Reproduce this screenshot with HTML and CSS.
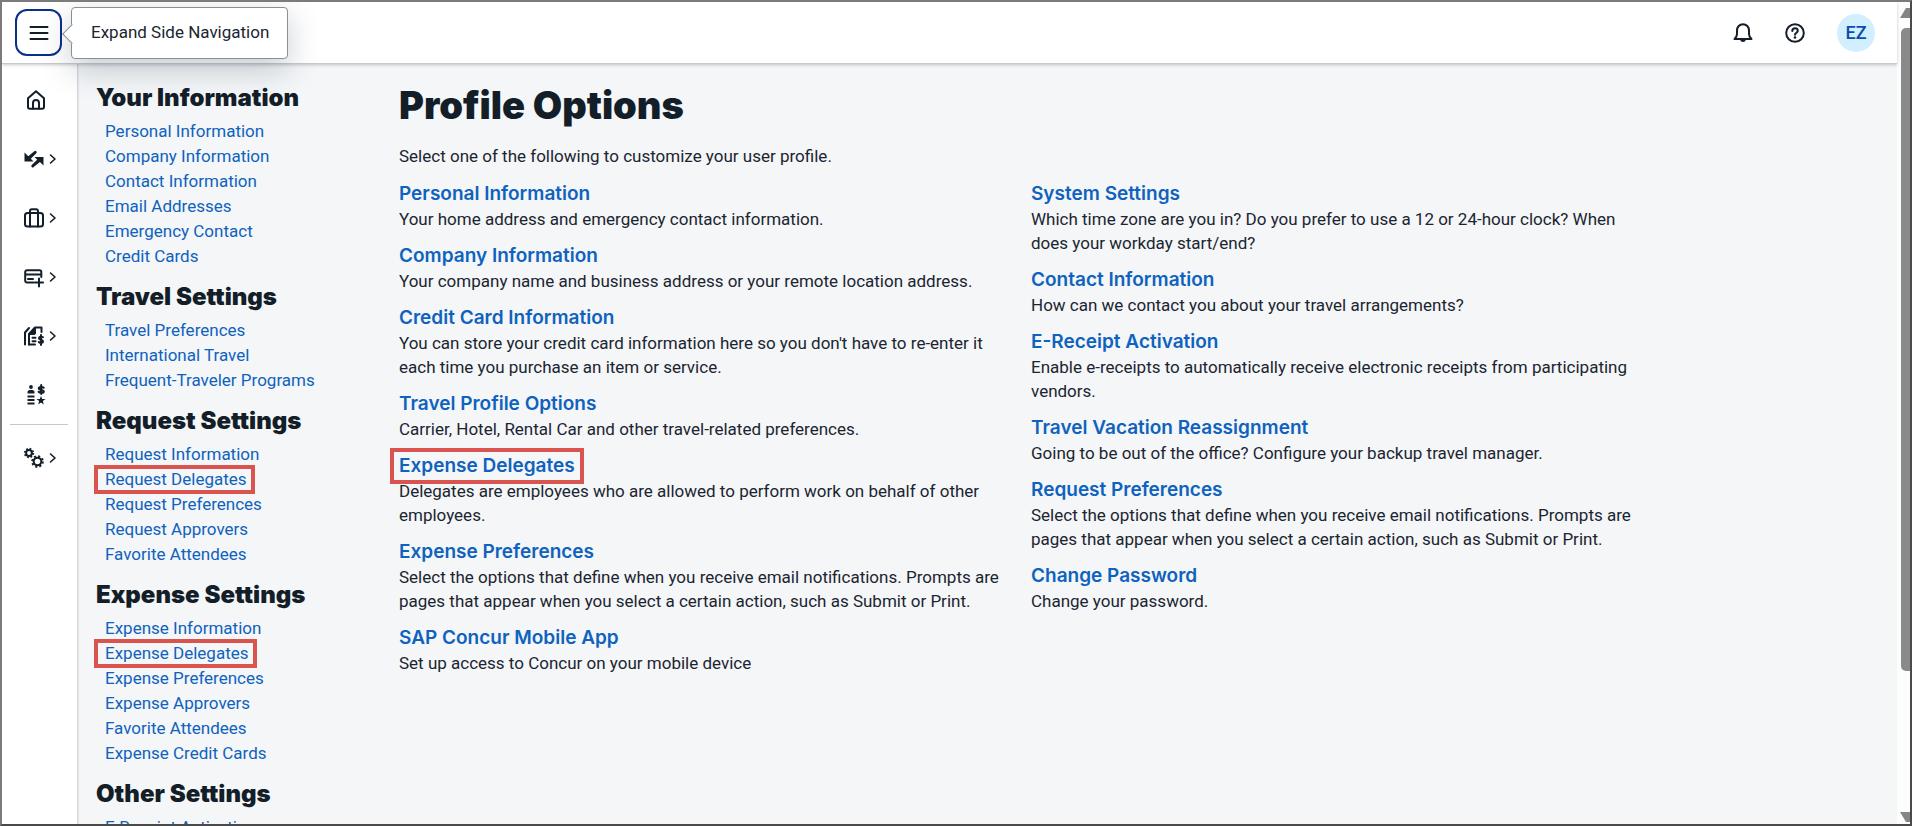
FILE: index.html
```html
<!DOCTYPE html>
<html lang="en">
<head>
    <meta charset="UTF-8">
    <meta name="viewport" content="width=device-width, initial-scale=1.0">
    <title>Profile Options</title>
    <link rel="stylesheet" href="styles.css">
</head>
<body>
    <div class="app">
        <header class="topbar">
            <div class="menu">
                <button class="menu-btn" aria-label="Expand Side Navigation">
                    <svg width="20" height="16" viewBox="0 0 20 16"><path d="M1.500 2h17M1.500 8h17M1.500 14h17"/></svg>
                </button>
                <div class="tooltip" role="tooltip">Expand Side Navigation</div>
            </div>
            <div class="tools">
                <button class="icon-btn" aria-label="Notifications">
                    <svg width="20" height="20" viewBox="0 0 20 20"><path d="M1.500 16h17c-1.800-1.500-2.500-3-2.500-5V7.500C16 4 13.500 1.200 10 1.200S4 4 4 7.500V11c0 2-.7 3.500-2.500 5z"/><path class="solid" d="M7 16.500h6c-.5 1.700-1.600 2.500-3 2.500s-2.500-.8-3-2.500z"/></svg>
                </button>
                <button class="icon-btn" aria-label="Help">
                    <svg width="20" height="20" viewBox="0 0 20 20"><circle cx="10" cy="10" r="8.800"/><path d="M7.300 8c0-1.700 1.200-2.700 2.800-2.700s2.700 1 2.700 2.400c0 2-2.800 2-2.800 4"/><circle class="solid" cx="10" cy="14.500" r="1.300"/></svg>
                </button>
                <button class="avatar">EZ</button>
            </div>
        </header>

        <div class="body">
            <nav class="rail" aria-label="Side navigation">
                <a href="#" class="rail-item" aria-label="Home">
                    <svg width="20" height="20" viewBox="0 0 20 20"><path d="M2 8.200 10 1.200l8 7V17a1.800 1.800 0 0 1-1.800 1.800H3.800A1.800 1.800 0 0 1 2 17z"/><path d="M7 18.500V13a3 3 0 0 1 6 0v5.500"/></svg>
                </a>
                <a href="#" class="rail-item has-menu" aria-label="Switch">
                    <svg width="20" height="20" viewBox="0 0 20 20"><path class="solid" d="M.5 3.500v9h9L6.800 9.800 12.300 4.300a1.400 1.400 0 0 0-2-2L4.300 7.300zM19.500 8h-9l2.700 2.700-5.500 5.200a1.400 1.400 0 0 0 2 2l6.200-5 3.600 3.600z"/></svg>
                    <svg class="chevron" width="8" height="10" viewBox="0 0 8 10"><path d="M1.500 1 6 5 1.500 9"/></svg>
                </a>
                <a href="#" class="rail-item has-menu" aria-label="Travel">
                    <svg width="20" height="20" viewBox="0 0 20 20"><rect x="1" y="5" width="18" height="13.500" rx="2.500"/><path d="M6 18.500V3a1.800 1.800 0 0 1 1.800-1.800h4.400A1.800 1.800 0 0 1 14 3v15.500"/></svg>
                    <svg class="chevron" width="8" height="10" viewBox="0 0 8 10"><path d="M1.500 1 6 5 1.500 9"/></svg>
                </a>
                <a href="#" class="rail-item has-menu" aria-label="Requests">
                    <svg width="20" height="20" viewBox="0 0 20 20"><path d="M9.500 15.500H3a1.800 1.800 0 0 1-1.800-1.800V5A1.800 1.800 0 0 1 3 3.200h12.500A1.800 1.800 0 0 1 17.300 5v5M1.200 7.500h16M4 12h5M15 11.500v8M11 15.500h8"/></svg>
                    <svg class="chevron" width="8" height="10" viewBox="0 0 8 10"><path d="M1.500 1 6 5 1.500 9"/></svg>
                </a>
                <a href="#" class="rail-item has-menu" aria-label="Expense">
                    <svg width="20" height="20" viewBox="0 0 20 20"><path d="M1 18.500V6.500l4-4.500M5 18.500V8l6-6.500h6.500V6"/><path class="solid" d="M5 9V7.500l5.500-6H12v6l-1.500 1.500z"/><path d="M5 18.500h6M8.500 11.800h3M8.500 15.200h3"/><path d="M19 11.200c-1-.8-4-.8-4 1 0 2 4 1 4 3.200 0 2-3 1.800-4.200.6M17 9v10"/></svg>
                    <svg class="chevron" width="8" height="10" viewBox="0 0 8 10"><path d="M1.500 1 6 5 1.500 9"/></svg>
                </a>
                <a href="#" class="rail-item" aria-label="Approvals">
                    <svg width="20" height="20" viewBox="0 0 20 20"><circle class="solid" cx="5" cy="2" r="1.900"/><path class="solid" d="M1.500 8.500V7c0-1.500 1.500-2 3.500-2S8.500 5.500 8.500 7v1.500zM1.500 10.500h7v2h-7zM1.500 14h7v2h-7zM1.500 17.500h7v2h-7zM15 11l1.200 2.900 3.300.2-2.600 2 .9 3.300-2.800-1.800-2.800 1.800.9-3.300-2.600-2 3.300-.2z"/><path d="M17.700 2.800c-1-1-4.900-1.200-4.900.6 0 2 5 1 5 3 0 1.900-4 1.700-5.200.4M15.200 0v9"/></svg>
                </a>
                <hr class="rail-line">
                <a href="#" class="rail-item has-menu" aria-label="Administration">
                    <svg width="20" height="20" viewBox="0 0 20 20"><circle cx="5" cy="5" r="2.900"/><circle class="teeth" cx="5" cy="5" r="4.200" stroke-dasharray="1.650 1.650"/><circle cx="13.500" cy="13.500" r="3.800"/><circle class="teeth" cx="13.500" cy="13.500" r="5.300" stroke-dasharray="2.080 2.080"/></svg>
                    <svg class="chevron" width="8" height="10" viewBox="0 0 8 10"><path d="M1.500 1 6 5 1.500 9"/></svg>
                </a>
            </nav>

            <aside class="sidebar">
                <h2>Your Information</h2>
                <ul>
                    <li><a href="#">Personal Information</a></li>
                    <li><a href="#">Company Information</a></li>
                    <li><a href="#">Contact Information</a></li>
                    <li><a href="#">Email Addresses</a></li>
                    <li><a href="#">Emergency Contact</a></li>
                    <li><a href="#">Credit Cards</a></li>
                </ul>
                <h2>Travel Settings</h2>
                <ul>
                    <li><a href="#">Travel Preferences</a></li>
                    <li><a href="#">International Travel</a></li>
                    <li><a href="#">Frequent-Traveler Programs</a></li>
                </ul>
                <h2>Request Settings</h2>
                <ul>
                    <li><a href="#">Request Information</a></li>
                    <li><a href="#" class="marked">Request Delegates</a></li>
                    <li><a href="#">Request Preferences</a></li>
                    <li><a href="#">Request Approvers</a></li>
                    <li><a href="#">Favorite Attendees</a></li>
                </ul>
                <h2>Expense Settings</h2>
                <ul>
                    <li><a href="#">Expense Information</a></li>
                    <li><a href="#" class="marked">Expense Delegates</a></li>
                    <li><a href="#">Expense Preferences</a></li>
                    <li><a href="#">Expense Approvers</a></li>
                    <li><a href="#">Favorite Attendees</a></li>
                    <li><a href="#">Expense Credit Cards</a></li>
                </ul>
                <h2>Other Settings</h2>
                <ul>
                    <li><a href="#">E-Receipt Activation</a></li>
                </ul>
            </aside>

            <main class="content">
                <h1>Profile Options</h1>
                <p class="intro">Select one of the following to customize your user profile.</p>
                <div class="columns">
                    <div class="column">
                        <h3><a href="#">Personal Information</a></h3>
                        <p>Your home address and emergency contact information.</p>
                        <h3><a href="#">Company Information</a></h3>
                        <p>Your company name and business address or your remote location address.</p>
                        <h3><a href="#">Credit Card Information</a></h3>
                        <p>You can store your credit card information here so you don't have to re-enter it each time you purchase an item or service.</p>
                        <h3><a href="#">Travel Profile Options</a></h3>
                        <p>Carrier, Hotel, Rental Car and other travel-related preferences.</p>
                        <h3><a href="#" class="marked">Expense Delegates</a></h3>
                        <p>Delegates are employees who are allowed to perform work on behalf of other employees.</p>
                        <h3><a href="#">Expense Preferences</a></h3>
                        <p>Select the options that define when you receive email notifications. Prompts are pages that appear when you select a certain action, such as Submit or Print.</p>
                        <h3><a href="#">SAP Concur Mobile App</a></h3>
                        <p>Set up access to Concur on your mobile device</p>
                    </div>
                    <div class="column">
                        <h3><a href="#">System Settings</a></h3>
                        <p>Which time zone are you in? Do you prefer to use a 12 or 24-hour clock? When does your workday start/end?</p>
                        <h3><a href="#">Contact Information</a></h3>
                        <p>How can we contact you about your travel arrangements?</p>
                        <h3><a href="#">E-Receipt Activation</a></h3>
                        <p>Enable e-receipts to automatically receive electronic receipts from participating vendors.</p>
                        <h3><a href="#">Travel Vacation Reassignment</a></h3>
                        <p>Going to be out of the office? Configure your backup travel manager.</p>
                        <h3><a href="#">Request Preferences</a></h3>
                        <p>Select the options that define when you receive email notifications. Prompts are pages that appear when you select a certain action, such as Submit or Print.</p>
                        <h3><a href="#">Change Password</a></h3>
                        <p>Change your password.</p>
                    </div>
                </div>
            </main>
        </div>
    </div>

    <div class="scrollbar">
        <span class="arrow-up"></span>
        <span class="thumb"></span>
        <span class="arrow-down"></span>
    </div>
</body>
</html>
```

FILE: styles.css
```css
* {
    box-sizing: border-box;
}
body {
    margin: 0;
    height: 100vh;
    display: flex;
    overflow: hidden;
    border: 2px solid #7b7b7b;
    border-right-color: #4a4a4a;
    border-bottom-color: #4a4a4a;
    background-color: #fdfdfd;
    color: #1b2530;
    font-family: Roboto, "Liberation Sans", sans-serif;
    font-size: 17px;
    line-height: 24px;
}
h1, h2, h3, p, ul {
    margin: 0;
    padding: 0;
}
h1, h2, h3 {
    font-family: Inter, "Liberation Sans", sans-serif;
}
a {
    color: #0f62bd;
    text-decoration: none;
}
button {
    border: none;
    padding: 0;
    background: none;
    font: inherit;
    cursor: pointer;
}
svg {
    fill: none;
    stroke: #131e29;
    stroke-width: 2;
    stroke-linecap: round;
    stroke-linejoin: round;
    overflow: visible;
}
.solid {
    fill: #131e29;
    stroke: none;
}
.teeth {
    stroke-linecap: butt;
}
.app {
    flex: 1;
    min-width: 0;
    display: flex;
    flex-direction: column;
}

/* top bar */
.topbar {
    position: relative;
    z-index: 2;
    flex: none;
    height: 62px;
    display: flex;
    align-items: center;
    justify-content: space-between;
    padding: 0 22px 0 13px;
    background-color: #fff;
    border-bottom: 1px solid #c5cad0;
    box-shadow: 0 1px 3px rgba(34, 53, 72, 0.25);
}
.menu {
    position: relative;
}
.menu-btn {
    display: flex;
    align-items: center;
    justify-content: center;
    width: 47px;
    height: 47px;
    border: 2px solid #0a2f8a;
    border-radius: 12px;
}
.tooltip {
    position: absolute;
    left: 56px;
    top: -2px;
    width: max-content;
    padding: 12px 18px 14px 19px;
    background-color: #fff;
    border: 1px solid #8a8f94;
    border-radius: 4px;
    box-shadow: 0 10px 30px rgba(34, 53, 72, 0.25);
}
.tooltip::before {
    content: "";
    position: absolute;
    left: -7px;
    top: 19px;
    width: 13px;
    height: 13px;
    background-color: #fff;
    border-left: 1px solid #8a8f94;
    border-bottom: 1px solid #8a8f94;
    transform: rotate(45deg);
}
.tools {
    display: flex;
    align-items: center;
    gap: 32px;
}
.icon-btn {
    display: flex;
}
.avatar {
    width: 38px;
    height: 38px;
    border-radius: 50%;
    background-color: #d1efff;
    color: #0a4bb0;
    font-size: 18px;
    font-weight: 500;
}

/* icon rail */
.body {
    flex: 1;
    min-height: 0;
    display: flex;
    background-color: #f4f6f8;
}
.rail {
    flex: none;
    width: 76px;
    padding-top: 6px;
    background-color: #fff;
    border-right: 1px solid #d3d7da;
    box-shadow: 0 0 2px rgba(34, 53, 72, 0.2);
}
.rail-item {
    display: flex;
    align-items: center;
    justify-content: center;
    height: 59px;
    padding-right: 8px;
}
.has-menu {
    justify-content: flex-start;
    gap: 5px;
    padding-left: 22px;
}
.chevron {
    stroke-width: 1.6;
}
.rail-line {
    margin: 0 9px 3px 8px;
    border: none;
    border-top: 1px solid #c5c8cb;
}

/* settings links */
.sidebar {
    flex: none;
    width: 302px;
    padding: 18px 0 0 18px;
}
.sidebar h2 {
    margin-bottom: 5px;
    color: #131e29;
    font-size: 24px;
    font-weight: 900;
    line-height: 32px;
}
.sidebar ul {
    margin-bottom: 12px;
    padding-left: 9px;
    list-style: none;
}
.sidebar li {
    line-height: 25px;
}
.marked {
    position: relative;
    display: inline-block;
}
.marked::after {
    content: "";
    position: absolute;
    inset: -2px -8px -2px -11px;
    border: 4px solid #d9534f;
}

/* profile options */
.content {
    flex: 1;
    min-width: 0;
    padding: 19px 19px 0;
}
.content h1 {
    color: #131e29;
    font-size: 38px;
    font-weight: 900;
    line-height: 44px;
}
.intro {
    margin: 17px 0 13px;
}
.columns {
    display: grid;
    grid-template-columns: repeat(2, minmax(0, 600px));
    gap: 32px;
}
.column h3 {
    font-size: 19px;
    font-weight: 600;
    line-height: 26px;
}
.column p {
    margin-bottom: 12px;
}
.column .marked::after {
    inset: -5px -9px;
}

/* scrollbar */
.scrollbar {
    flex: none;
    width: 13px;
    display: flex;
    flex-direction: column;
    align-items: flex-end;
    padding: 6px 0 2px;
}
.arrow-up, .arrow-down {
    width: 10px;
    height: 10px;
    background-color: #858585;
    clip-path: polygon(60% 0, 100% 0, 100% 100%, 0 100%);
}
.arrow-down {
    margin-top: auto;
    clip-path: polygon(0 0, 100% 0, 100% 100%, 60% 100%);
}
.thumb {
    width: 9px;
    height: 79%;
    margin-top: 10px;
    border-radius: 5px 0 0 5px;
    background-color: #8a8a8a;
}
```
